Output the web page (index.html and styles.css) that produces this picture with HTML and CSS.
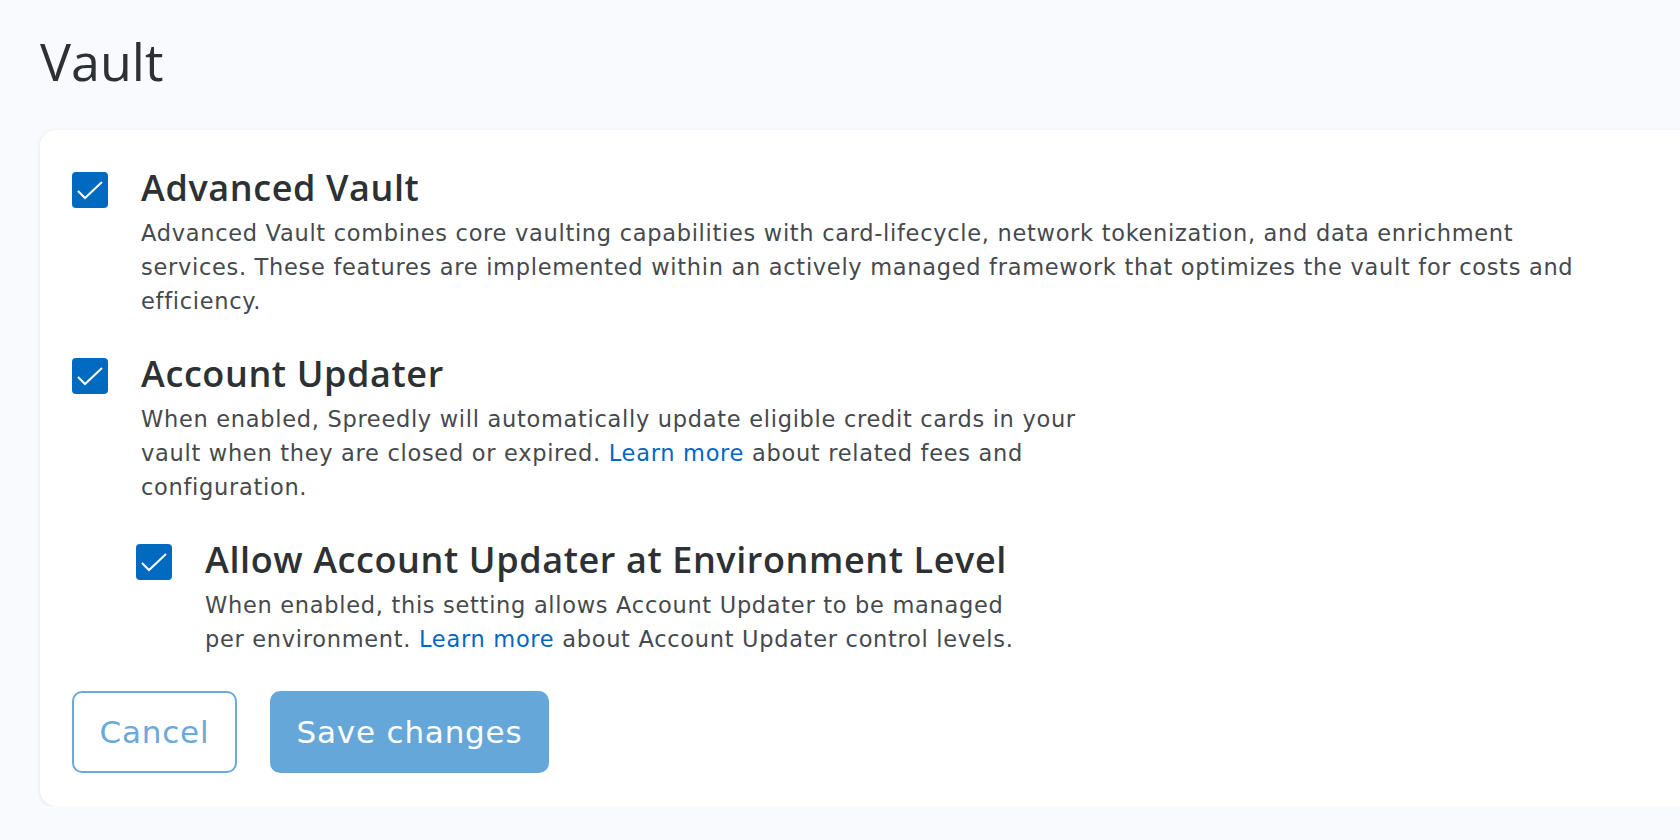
FILE: index.html
```html
<!DOCTYPE html>
<html lang="en">
<head>
  <meta charset="UTF-8">
  <title>Vault settings</title>
  <link rel="stylesheet" href="styles.css">
</head>
<body>
  <div class="page">
    <h1 class="page-title">Vault</h1>

    <form class="card">
      <div class="option">
        <span class="checkbox checked">
          <svg viewBox="0 0 36 36" width="36" height="36"><path d="M6 19 L13 26 L30 10" /></svg>
        </span>
        <div class="option-body">
          <h2 class="option-title">Advanced Vault</h2>
          <p class="option-desc desc-wide">Advanced Vault combines core vaulting capabilities with card-lifecycle, network tokenization, and data enrichment services. These features are implemented within an actively managed framework that optimizes the vault for costs and efficiency.</p>
        </div>
      </div>

      <div class="option">
        <span class="checkbox checked">
          <svg viewBox="0 0 36 36" width="36" height="36"><path d="M6 19 L13 26 L30 10" /></svg>
        </span>
        <div class="option-body">
          <h2 class="option-title">Account Updater</h2>
          <p class="option-desc desc-mid">When enabled, Spreedly will automatically update eligible credit cards in your vault when they are closed or expired. <a href="#">Learn more</a> about related fees and configuration.</p>
        </div>
      </div>

      <div class="option option-nested">
        <span class="checkbox checked">
          <svg viewBox="0 0 36 36" width="36" height="36"><path d="M6 19 L13 26 L30 10" /></svg>
        </span>
        <div class="option-body">
          <h2 class="option-title">Allow Account Updater at Environment Level</h2>
          <p class="option-desc desc-narrow">When enabled, this setting allows Account Updater to be managed per environment. <a href="#">Learn more</a> about Account Updater control levels.</p>
        </div>
      </div>

      <div class="actions">
        <button type="button" class="btn btn-outline">Cancel</button>
        <button type="button" class="btn btn-primary">Save changes</button>
      </div>
    </form>
  </div>
</body>
</html>
```

FILE: styles.css
```css
html, body {
  margin: 0;
  overflow: hidden;
}
body {
  background-color: #f9fafd;
  font-family: "Open Sans", "Liberation Sans", sans-serif;
  color: #2d3133;
}
.page {
  padding: 30px 0 0 40px;
}
.page-title {
  font-size: 52px;
  font-weight: 400;
  line-height: 62px;
  margin: 0 0 38px 0;
  color: #2d3133;
}
.card {
  width: 1700px;
  background: #fff;
  border-radius: 16px;
  box-shadow: 0 1px 4px rgba(30, 40, 60, 0.1);
  padding: 37px 32px 33px 32px;
  box-sizing: border-box;
}
.option {
  display: flex;
  gap: 33px;
  margin-bottom: 35px;
}
.option-nested {
  margin-left: 64px;
}
.checkbox {
  flex: none;
  width: 36px;
  height: 36px;
  margin-top: 5px;
  border-radius: 4px;
  background: #0069c0;
}
.checkbox svg {
  display: block;
}
.checkbox path {
  fill: none;
  stroke: #fff;
  stroke-width: 2;
}
.option-title {
  font-size: 36px;
  font-weight: 600;
  letter-spacing: 0.6px;
  line-height: 42px;
  margin: 0;
  color: #2d3133;
}
.option-desc {
  font-family: "DejaVu Sans", "Open Sans", sans-serif;
  font-size: 22.5px;
  letter-spacing: 0.7px;
  line-height: 34px;
  margin: 7px 0 0 0;
  color: #45494c;
}
.option-desc a {
  color: #0067c5;
  text-decoration: none;
}
.desc-wide { max-width: 1460px; }
.desc-mid { max-width: 965px; }
.desc-narrow { max-width: 825px; }

.actions {
  display: flex;
  gap: 33px;
  margin-top: 34px;
}
.btn {
  height: 82px;
  border-radius: 10px;
  font-family: "DejaVu Sans", "Open Sans", sans-serif;
  font-size: 31px;
  letter-spacing: 0.8px;
  padding: 0 16px;
  cursor: pointer;
}
.btn-outline {
  background: #fff;
  border: 2px solid #6aa9db;
  color: #6aa9db;
  width: 165px;
}
.btn-primary {
  background: #66a7d9;
  border: none;
  color: #fff;
  width: 279px;
}
```
